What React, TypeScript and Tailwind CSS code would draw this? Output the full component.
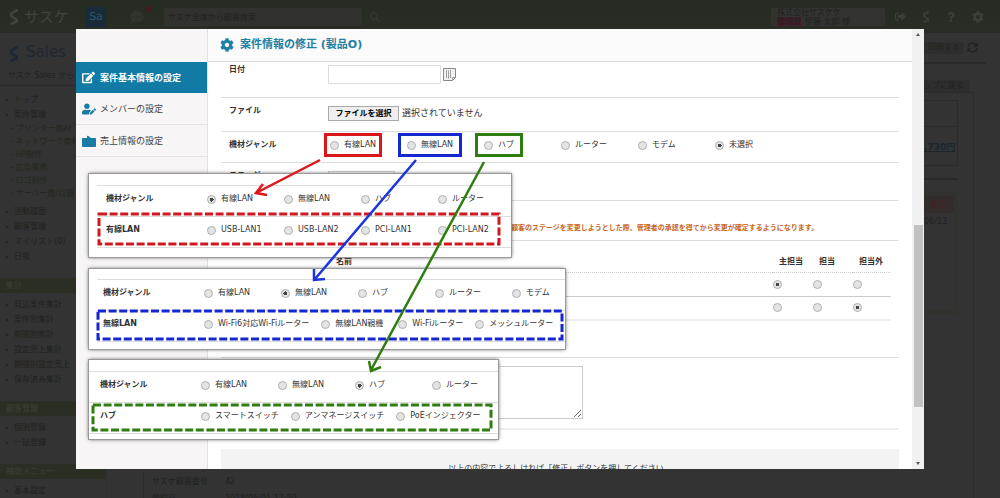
import React from 'react';
import { FaCog, FaCommentDots, FaEdit, FaQuestion, FaSearch, FaSignOutAlt, FaSyncAlt, FaUserEdit } from 'react-icons/fa';
import { clsx } from 'clsx';

interface Option {
    label: string;
    mark?: 'red' | 'blue' | 'green';
}

const MARK_STYLES = {
    red: 'outline-[3px] outline-offset-[3px] outline-[#d8161b]',
    blue: '-mx-[3px] px-[3px] outline-[3px] outline-offset-[3px] outline-[#1527cf]',
    green: '-mx-[3px] px-[3px] outline-[3px] outline-offset-[3px] outline-[#2f7d10]',
};

const RADIO_CLASS =
    'block size-[9px] shrink-0 appearance-none rounded-full border border-[#b0b0b0] bg-[#e4e4e4] checked:bg-[radial-gradient(circle,#444_0_2px,#e4e4e4_2px)]';

const GENRES: Option[] = [
    { label: '有線LAN', mark: 'red' },
    { label: '無線LAN', mark: 'blue' },
    { label: 'ハブ', mark: 'green' },
    { label: 'ルーター' },
    { label: 'モデム' },
    { label: '未選択' },
];

const POPUP_GENRES: Option[] = [{ label: '有線LAN' }, { label: '無線LAN' }, { label: 'ハブ' }, { label: 'ルーター' }];

interface RadioRowProps {
    name: string;
    options: Option[];
    selected?: string;
}

const RadioRow: React.FC<RadioRowProps> = ({ name, options, selected }) => (
    <div role="radiogroup" className="flex">
        {options.map(({ label, mark }) => (
            <div key={label} className="min-w-[77px] shrink-0 pr-3">
                <label className={clsx('flex h-3 w-fit items-center gap-[5px] whitespace-nowrap', mark && MARK_STYLES[mark])}>
                    <input type="radio" name={name} defaultChecked={label === selected} className={RADIO_CLASS} />
                    <span>{label}</span>
                </label>
            </div>
        ))}
    </div>
);

interface FormRowProps {
    label: string;
    className?: string;
    labelClass?: string;
    htmlFor?: string;
    children?: React.ReactNode;
}

const FormRow: React.FC<FormRowProps> = ({ label, className, labelClass = 'pt-[7px]', htmlFor, children }) => (
    <div className={clsx('flex items-start border-b border-[#ddd] pl-2', className)}>
        <label htmlFor={htmlFor} className={clsx('w-[99px] shrink-0 font-bold', labelClass)}>
            {label}
        </label>
        {children}
    </div>
);

interface GenrePopupProps {
    name: string;
    selected: string;
    genres: Option[];
    subLabel: string;
    subOptions: Option[];
    color: string;
    className: string;
    rowClass: string;
    frameClass: string;
}

const GenrePopup: React.FC<GenrePopupProps> = (props) => (
    <section
        className={clsx(
            'absolute left-[13px] overflow-hidden bg-white outline outline-[#999] shadow-[0_0_4px_#333]',
            props.className
        )}
    >
        <div className={clsx('flex h-[31px] items-start border-t border-[#ddd] pt-[7px]', props.rowClass)}>
            <span className="w-[101px] shrink-0 font-bold">機材ジャンル</span>
            <RadioRow name={`${props.name}-genre`} options={props.genres} selected={props.selected} />
        </div>
        <div className={clsx('flex h-8 items-start border-y border-[#ddd] pt-[7px]', props.rowClass)}>
            <span className="w-[101px] shrink-0 font-bold">{props.subLabel}</span>
            <RadioRow name={`${props.name}-sub`} options={props.subOptions} />
        </div>
        <svg className={clsx('pointer-events-none absolute overflow-visible', props.frameClass)} aria-hidden="true">
            <rect width="100%" height="100%" fill="none" stroke={props.color} strokeWidth="3" strokeDasharray="8 2.6" />
        </svg>
    </section>
);

const NAV_GROUPS = [
    { title: '集計', items: ['見込案件集計', '案件別集計', '期間別集計', '設定売上集計', '期間別設定売上', '保存済み集計'] },
    { title: '顧客登録', items: ['個別登録', '一括登録'] },
    { title: '補助メニュー', items: ['基本設定'] },
];

const NavItem: React.FC<{ text: string }> = ({ text }) => (
    <li className="flex h-[15px] items-center gap-1.5 pl-1.5 whitespace-nowrap">
        <span className="size-0.5 bg-[#252525]" />
        <a href="#">{text}</a>
    </li>
);

const SasukeMark: React.FC<{ className: string }> = ({ className }) => (
    <svg viewBox="0 0 12 18" className={className} fill="none" stroke="currentColor" strokeWidth="3">
        <path d="M10 1 3 5v3l6 4v2l-7 3" />
    </svg>
);

const PageBehind: React.FC = () => (
    <div className="flex h-full flex-col text-[#202220]">
        <header className="flex h-[33px] shrink-0 items-center bg-linear-to-b from-[#252c22] to-[#2a2d25] pl-2">
            <SasukeMark className="h-4 w-3 text-[#40443c]" />
            <div className="ml-1 w-[62px] text-[#40443c]">
                <div className="text-[15px] leading-4">サスケ</div>
            </div>
            <div className="flex size-5 items-center justify-center bg-[#172b38] text-[11px] text-[#31566b]">Sa</div>
            <div className="relative ml-6 text-[#30352b]">
                <FaCommentDots size={14} />
                <span className="absolute -top-1 -right-2 size-1.5 rounded-full bg-[#451b1b]" />
            </div>
            <input
                aria-label="検索"
                defaultValue="サスケ全体から顧客検索"
                className="ml-5 h-[18px] w-[198px] rounded-xs bg-[#31322f] pl-1 text-[8px]"
            />
            <FaSearch size={10} className="ml-2 text-[#33382f]" />
            <div className="mr-2.5 ml-auto h-[18px] w-[114px] bg-[#323331] pl-1.5 leading-[9px]">
                <div>株式会社サスケケ</div>
                <div>
                    <span className="mr-1 bg-[#471c2a]">管理者</span>
                    伊藤 太郎 様
                </div>
            </div>
            <div className="flex items-center gap-4 pr-4 text-[#3a3f36]">
                <FaSignOutAlt size={11} />
                <SasukeMark className="h-3 w-2" />
                <FaQuestion size={10} />
                <FaCog size={12} />
            </div>
        </header>

        <div className="flex min-h-0 grow">
            <aside className="w-[106px] shrink-0">
                <div className="flex h-[33px] items-end gap-1.5 pb-1 pl-2 text-[15px] leading-5 text-[#1c2833]">
                    <SasukeMark className="h-4 w-3" />
                    Sales
                </div>
                <div className="h-5 border-b border-[#2b2b2b] pl-2 leading-5 whitespace-nowrap">サスケ Sales から</div>
                <nav>
                    <ul className="pt-1.5">
                        <NavItem text="トップ" />
                        <NavItem text="案件管理" />
                        {['プリンター商材', 'ネットワーク商材', 'HP制作', '広告業務', 'ロゴ制作', 'サーバー費/月額'].map((text) => (
                            <li key={text} className="h-[13px] pl-2.5 leading-[13px] whitespace-nowrap text-[#22281d]">
                                <a href="#">- {text}</a>
                            </li>
                        ))}
                    </ul>
                    <ul className="pt-1">
                        {['活動履歴', '顧客管理', 'マイリスト(0)', '日報'].map((text) => (
                            <NavItem key={text} text={text} />
                        ))}
                    </ul>
                    {NAV_GROUPS.map(({ title, items }) => (
                        <div key={title} className="pt-3.5">
                            <h3 className="h-[15px] bg-[#2b2f23] pl-1.5 leading-[15px] text-[#3c4033]">{title}</h3>
                            <ul className="pt-1">
                                {items.map((item) => (
                                    <NavItem key={item} text={item} />
                                ))}
                            </ul>
                        </div>
                    ))}
                </nav>
            </aside>
            <main className="flex grow flex-col justify-end border-l border-[#303030]">
                <div className="ml-9 border-l border-[#2b2b2b] pl-2 leading-[17px]">
                    <div className="flex h-[17px]">
                        <span className="w-[73px]">サスケ顧客番号</span>42
                    </div>
                    <div className="flex h-2 overflow-hidden">
                        <span className="w-[73px]">登録日</span>2018/05/01 17:59
                    </div>
                </div>
            </main>
            <aside className="flex w-[76px] shrink-0 flex-col pr-3.5">
                <div className="flex h-[31px] items-center justify-between border-b-2 border-[#292929]">
                    <button type="button" className="h-3 rounded-r-sm bg-[#2d2e2d] px-1">
                        印刷する
                    </button>
                    <FaSyncAlt size={11} className="mr-2 text-[#252525]" />
                </div>
                <a href="#" className="mt-4 w-[46px] bg-[#2d2e2d] whitespace-nowrap">
                    ップに戻る
                </a>
                <div className="mr-3 grow border-t border-r border-[#2b2b2b] pt-[7px]">
                    <div className="h-[66px] w-[34px] border-y border-r border-[#2a2a2a]">
                        <div className="h-[26px] border-b border-[#2a2a2a]" />
                        <div className="flex h-[26px] items-end text-[9px] font-bold whitespace-nowrap text-[#1b2731] underline">
                            ,730円
                        </div>
                    </div>
                    <div className="mt-3 w-[34px] border-t-2 border-[#292929] pt-3">
                        <div className="h-[122px] border-4 border-l-0 border-[#31322e] leading-[17px]">
                            <div className="bg-[#322d2b] pl-1.5 font-bold text-[#402322]">修正</div>
                            <div>06/13</div>
                        </div>
                    </div>
                </div>
            </aside>
        </div>
    </div>
);

const MenuIcon: React.FC = () => (
    <svg viewBox="0 0 14 12" className="h-3 w-3.5" fill="currentColor">
        <path d="M1 3h4V1.500C5 .8 5.500.5 6 .8L9 3h4c.6 0 1 .4 1 1v7c0 .6-.4 1-1 1H1c-.6 0-1-.4-1-1V4c0-.6.4-1 1-1Z" />
    </svg>
);

const CalendarIcon: React.FC = () => (
    <svg viewBox="0 0 13 13" className="size-[13px]" fill="#f2f2f2" stroke="#888">
        <path d="M.5.5h12v9l-3 3h-9Z" />
        <path d="M3.5 2v8M5.5 2.500v8M7.500 2v8M9.500 12.500v-3h3" strokeWidth=".8" fill="none" />
    </svg>
);

const TABS = [
    { label: '案件基本情報の設定', icon: <FaEdit size={13} />, active: true },
    { label: 'メンバーの設定', icon: <FaUserEdit size={14} /> },
    { label: '売上情報の設定', icon: <MenuIcon /> },
];

const EditDialog: React.FC = () => (
    <div role="dialog" aria-labelledby="dialog-title" className="absolute inset-x-[76px] inset-y-[29px] flex overflow-hidden bg-white">
        <nav className="w-[132px] shrink-0 border-r border-[#e3e1e2] bg-[#f7f5f6] pt-[33px]">
            {TABS.map(({ label, icon, active }) => (
                <a
                    key={label}
                    href="#"
                    className={clsx(
                        'flex items-center text-[9px] whitespace-nowrap',
                        active ? 'h-[31px] bg-[#117ba6] font-bold text-white' : 'h-8 border-b border-[#e6e4e5] text-[#444]'
                    )}
                >
                    <span className={clsx('w-6 pl-1.5', !active && 'text-[#1a7ca5]')}>{icon}</span>
                    {label}
                </a>
            ))}
        </nav>

        <div className="min-w-0 grow">
            <header className="flex h-[33px] items-center gap-1.5 border-b border-[#d8d8d8] bg-[#fbfbfb] pl-3 text-[#207fa5]">
                <FaCog size={14} />
                <h2 id="dialog-title" className="text-[11px] font-bold">
                    案件情報の修正 (製品O)
                </h2>
            </header>

            <form className="px-[13px]">
                <FormRow label="日付" htmlFor="date" className="h-9" labelClass="pt-0.5">
                    <input id="date" type="text" className="mt-[3px] h-[19px] w-[113px] border border-[#ddd]" />
                    <button type="button" aria-label="カレンダー" className="mt-1.5 ml-0.5">
                        <CalendarIcon />
                    </button>
                </FormRow>
                <FormRow label="ファイル" htmlFor="file" className="h-[34px]">
                    <button
                        id="file"
                        type="button"
                        className="mt-2 h-[15px] w-[71px] border border-[#aaa] bg-[#eee] leading-3 font-bold whitespace-nowrap text-black"
                    >
                        ファイルを選択
                    </button>
                    <span className="mt-[9px] ml-[3px] text-[9px] leading-3">選択されていません</span>
                </FormRow>
                <FormRow label="機材ジャンル" className="h-[31px]">
                    <div className="pt-[7px] pl-0.5">
                        <RadioRow name="genre" options={GENRES} selected="未選択" />
                    </div>
                </FormRow>
                <FormRow label="ステージ" htmlFor="stage" className="h-[38px]">
                    <select id="stage" className="mt-2 h-4 w-[67px] appearance-none border border-[#ccc]" />
                </FormRow>
                <div className="h-10 border-b border-[#ddd] pt-[21px] pl-[290px] text-[7px] font-bold whitespace-nowrap text-[#c9661f]">
                    顧客のステージを変更しようとした際、管理者の承認を得てから変更が確定するようになります。
                </div>
                <div className="pr-2 pl-[107px]">
                    <table className="w-full table-fixed text-left">
                        <thead>
                            <tr className="h-[31px] border-b border-dotted border-[#ccc] *:pt-3">
                                <th className="pl-2">名前</th>
                                <th className="w-10 pl-1.5 whitespace-nowrap">主担当</th>
                                <th className="w-10 pl-1.5">担当</th>
                                <th className="w-[38px] pl-1.5 whitespace-nowrap">担当外</th>
                            </tr>
                        </thead>
                        <tbody>
                            {[0, 2].map((checked, row) => (
                                <tr key={row} className={clsx('h-6', row === 0 ? 'border-b border-[#ccc]' : 'border-b-2 border-[#eee]')}>
                                    <td />
                                    {['主担当', '担当', '担当外'].map((role, col) => (
                                        <td key={role}>
                                            <input
                                                type="radio"
                                                name={`member-${row}`}
                                                aria-label={role}
                                                defaultChecked={col === checked}
                                                className={RADIO_CLASS}
                                            />
                                        </td>
                                    ))}
                                </tr>
                            ))}
                        </tbody>
                    </table>
                </div>
                <div className="h-[37px] border-b border-[#ddd]" />
                <FormRow label="備考" htmlFor="memo" className="h-[72px] border-b-2 border-[#eee]">
                    <textarea id="memo" className="mt-2 h-[53px] w-[255px] border border-[#ccc]" />
                </FormRow>
                <p className="mt-[19px] h-10 bg-[#f3f3f3] pt-3.5 text-center">
                    以上の内容でよろしければ「修正」ボタンを押してください。
                </p>
            </form>
        </div>

        <div className="flex w-3 shrink-0 flex-col items-center bg-[#f1f1f1] py-1">
            <span className="border-x-2 border-b-3 border-x-transparent border-b-[#555]" />
            <span className="mt-[189px] h-[182px] w-[9px] bg-[#c1c1c1]" />
            <span className="mt-auto border-x-2 border-t-3 border-x-transparent border-t-[#555]" />
        </div>

        <GenrePopup
            name="wired"
            selected="有線LAN"
            genres={POPUP_GENRES}
            subLabel="有線LAN"
            subOptions={[{ label: 'USB-LAN1' }, { label: 'USB-LAN2' }, { label: 'PCI-LAN1' }, { label: 'PCI-LAN2' }]}
            color="#cf1820"
            className="top-[145px] h-[83px] w-[422px] pt-[11px]"
            rowClass="ml-2 pl-[9px]"
            frameClass="left-2.5 top-10 h-[30px] w-[400px]"
        />
        <GenrePopup
            name="wireless"
            selected="無線LAN"
            genres={[...POPUP_GENRES, { label: 'モデム' }]}
            subLabel="無線LAN"
            subOptions={[
                { label: 'Wi-Fi6対応Wi-Fiルーター' },
                { label: '無線LAN親機' },
                { label: 'Wi-Fiルーター' },
                { label: 'メッシュルーター' },
            ]}
            color="#1527cf"
            className="top-[240px] h-20 w-[476px] pt-2.5"
            rowClass="ml-2 pl-1.5"
            frameClass="left-[9px] top-[42px] h-7 w-[464px]"
        />
        <GenrePopup
            name="hub"
            selected="ハブ"
            genres={POPUP_GENRES}
            subLabel="ハブ"
            subOptions={[{ label: 'スマートスイッチ' }, { label: 'アンマネージスイッチ' }, { label: 'PoEインジェクター' }]}
            color="#2f7d10"
            className="top-[331px] h-[79px] w-[409px] pt-[11px]"
            rowClass="pl-[11px]"
            frameClass="left-1 top-[45px] h-[25px] w-[398px]"
        />

        {/* Arrows from each genre to its sub-options */}
        <svg viewBox="0 0 500 400" className="pointer-events-none absolute top-0 left-0 h-[400px] w-[500px]" fill="none" strokeWidth="2.5">
            <path d="M244 131 180 164M187 155 180 164 191 166" stroke="#df161b" />
            <path d="M340 131 239 250M238 240V251L249 250" stroke="#1c35dc" />
            <path d="M408 133 295 341M293 332 295 342 305 338" stroke="#2f7d10" />
        </svg>
    </div>
);

export default function App() {
    return (
        <div className="relative h-screen overflow-hidden bg-[#333] font-['DejaVu_Sans','Noto_Sans_CJK_JP',sans-serif] text-[8px] leading-3 text-[#333]">
            <PageBehind />
            <EditDialog />
        </div>
    );
}
